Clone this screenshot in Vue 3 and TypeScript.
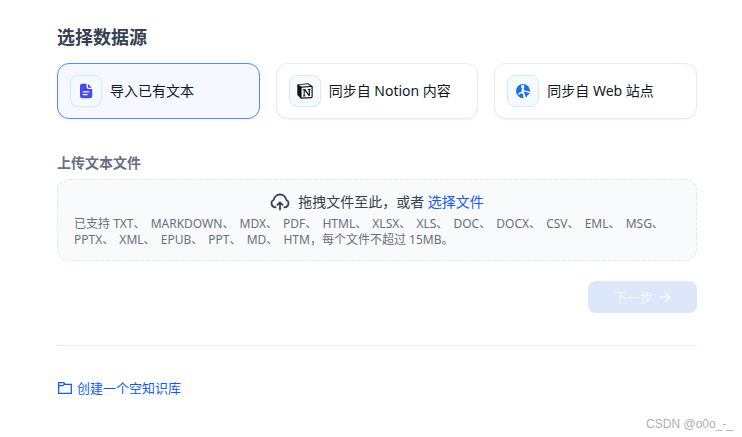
<script setup lang="ts">
import { ref } from 'vue'

type Source = 'file' | 'notion' | 'web'

const sources: { id: Source; label: string }[] = [
  { id: 'file', label: '导入已有文本' },
  { id: 'notion', label: '同步自 Notion 内容' },
  { id: 'web', label: '同步自 Web 站点' },
]
const selected = ref<Source>('file')

const formats: string[] = [
  'TXT', 'MARKDOWN', 'MDX', 'PDF', 'HTML', 'XLSX', 'XLS', 'DOC', 'DOCX', 'CSV',
  'EML', 'MSG', 'PPTX', 'XML', 'EPUB', 'PPT', 'MD',
]
const lastFormat = 'HTM'
</script>

<template>
  <main class="page">
    <h1 class="title">选择数据源</h1>
    <div class="sources">
      <button
        v-for="source in sources"
        :key="source.id"
        type="button"
        class="source"
        :class="{ active: selected === source.id }"
        :aria-pressed="selected === source.id"
        @click="selected = source.id"
      >
        <span class="badge">
          <svg v-if="source.id === 'file'" width="16" height="16" viewBox="0 0 16 16" aria-hidden="true">
            <path fill="#444ce7" d="M4.200 0.700H8.600V4.300Q8.600 6 10.300 6H14.200V13Q14.200 15.200 12 15.200H4.200Q2 15.200 2 13V2.900Q2 0.700 4.200 0.700Z" />
            <path fill="#444ce7" d="M10 1 13.800 4.800H10.600Q10 4.800 10 4.200Z" />
            <path stroke="#f5faff" stroke-width="1.200" stroke-linecap="round" d="M5.200 8.900H10.800M5.200 11.600H9.200" />
          </svg>
          <svg v-else-if="source.id === 'notion'" width="18" height="18" viewBox="0 0 18 18" aria-hidden="true">
            <path fill="#111" d="M1.300 2.500 12.200 1.300 16.700 4.200V15.300L15.600 16.300 5 16.800 1.300 13Z" />
            <path fill="#fff" d="M3 3.100 11.900 2.300 14.300 3.900 5.200 4.500ZM5.600 5.700 15.500 5.100V15L5.600 15.600Z" />
            <path fill="#111" d="M6.800 7.200 9.200 7 12.700 12.100V7.900L11.700 7.700V7L14.600 6.800V7.500L13.900 7.800V14L12.700 14.100 8.700 8.700V13.500L9.800 13.700V14.300L6.800 14.500V13.800L7.600 13.500V8.100L6.800 7.900Z" />
          </svg>
          <svg v-else width="16" height="16" viewBox="0 0 16 16" aria-hidden="true">
            <circle cx="8" cy="8" r="7" fill="#1570ef" />
            <path fill="#f5faff" d="M6.200 2.200 8.800 1.800 9.400 4.500 8.700 5.300 9 7.100 11 7.800 15.600 9V16H9.200L8 13.500 8 10.800 5.200 10.600 3.800 12.200 2.600 11.600 4.500 9.600 6.600 8.600 6.800 5.500 6.200 4.400Z" />
            <path fill="#1570ef" d="M3.200 12.500 4.700 11.700 7.200 12 8.600 14.900Q5.300 15.300 3.200 12.500ZM8.600 8.300 15.300 10.400 12.600 11.900 11.200 15Z" />
          </svg>
        </span>
        <span>{{ source.label }}</span>
      </button>
    </div>

    <h2 class="label">上传文本文件</h2>
    <section class="dropzone">
      <div class="prompt">
        <svg width="20" height="20" viewBox="0 0 20 20" fill="none" stroke="#354052" stroke-width="1.800" stroke-linecap="round" stroke-linejoin="round" aria-hidden="true">
          <path d="M5.600 15.300A4 4 0 0 1 3.800 7.700 6.300 6.300 0 0 1 16.200 7.700 4 4 0 0 1 14.400 15.300M10 17.500V10.500M7.400 12.900 10 10.300 12.600 12.900" />
        </svg>
        <span>拖拽文件至此，或者 <a href="#">选择文件</a></span>
      </div>
      <p class="hint">已支持 <template v-for="format in formats" :key="format"><span class="format">{{ format }}、</span>{{ ' ' }}</template>{{ lastFormat }}，每个文件不超过 15MB。</p>
    </section>

    <div class="actions">
      <button type="button" class="next" disabled>
        <span>下一步</span>
        <svg width="16" height="16" viewBox="0 0 16 16" fill="none" stroke="currentColor" stroke-width="1.400" aria-hidden="true">
          <path d="M2.500 8H13M8.200 3.200 13 8 8.200 12.800" />
        </svg>
      </button>
    </div>

    <hr class="divider" />
    <a class="create" href="#">
      <svg width="16" height="16" viewBox="0 0 16 16" fill="none" stroke="currentColor" stroke-width="1.300" aria-hidden="true">
        <path d="M1.700 2.700H6.700L8.200 4.300H14.300V13.300H1.700ZM1.700 5.700H5.700L7.500 4.300" />
      </svg>
      <span>创建一个空知识库</span>
    </a>
    <footer class="watermark">CSDN @o0o_-_</footer>
  </main>
</template>

<style>
body {
  margin: 0;
  background: #fff;
}
</style>

<style scoped>
.page {
  position: relative;
  box-sizing: border-box;
  padding: 24px 45px 36px 57px;
  font-family: "Noto Sans", "Noto Sans CJK SC", sans-serif;
  font-size: 14px;
  line-height: 20px;
  color: #354052;
}
.title {
  margin: 0 0 12px;
  font-size: 18px;
  line-height: 27px;
  font-weight: 600;
}
.sources {
  display: grid;
  grid-template-columns: repeat(3, 1fr);
  gap: 16px;
}
.source {
  display: flex;
  align-items: center;
  gap: 8px;
  padding: 11px 12px;
  border: 1px solid #e9ebf0;
  border-radius: 12px;
  background: #fff;
  box-shadow: 0 1px 2px rgba(16, 24, 40, 0.06);
  font: inherit;
  color: #101828;
  white-space: nowrap;
  cursor: pointer;
}
.source.active {
  border-color: #528bff;
  background: #f5f8ff;
}
.badge {
  display: flex;
  align-items: center;
  justify-content: center;
  box-sizing: border-box;
  width: 32px;
  height: 32px;
  border: 1px solid #d1e9ff;
  border-radius: 8px;
  background: #f5faff;
}
.label {
  margin: 34px 0 6px;
  font-size: 14px;
  line-height: 20px;
  font-weight: 600;
  color: #676f83;
}
.dropzone {
  padding: 12px 16px;
  border: 1px dashed #e4e5e9;
  border-radius: 12px;
  background: #f9fafb;
}
.prompt {
  display: flex;
  align-items: center;
  justify-content: center;
  gap: 8px;
  margin-bottom: 4px;
}
a {
  color: #155aef;
  text-decoration: none;
}
.hint {
  margin: 0;
  font-size: 12px;
  line-height: 16px;
  color: #676f83;
}
.format {
  margin-right: 2px;
}
.actions {
  display: flex;
  justify-content: flex-end;
  margin-top: 20px;
}
.next {
  display: flex;
  align-items: center;
  gap: 4px;
  padding: 6px 24px 6px 26px;
  border: 0;
  border-radius: 8px;
  background: #dce7fc;
  font: inherit;
  font-size: 13px;
  color: #f5f8fe;
}
.divider {
  margin: 32px 0;
  border: 0;
  border-top: 1px solid #e9ebf0;
}
.create {
  display: inline-flex;
  align-items: center;
  gap: 4px;
  font-size: 13px;
}
.watermark {
  position: absolute;
  right: 9px;
  bottom: 3px;
  font-family: "Liberation Sans", sans-serif;
  font-size: 12px;
  color: #b0b0b0;
}
</style>
